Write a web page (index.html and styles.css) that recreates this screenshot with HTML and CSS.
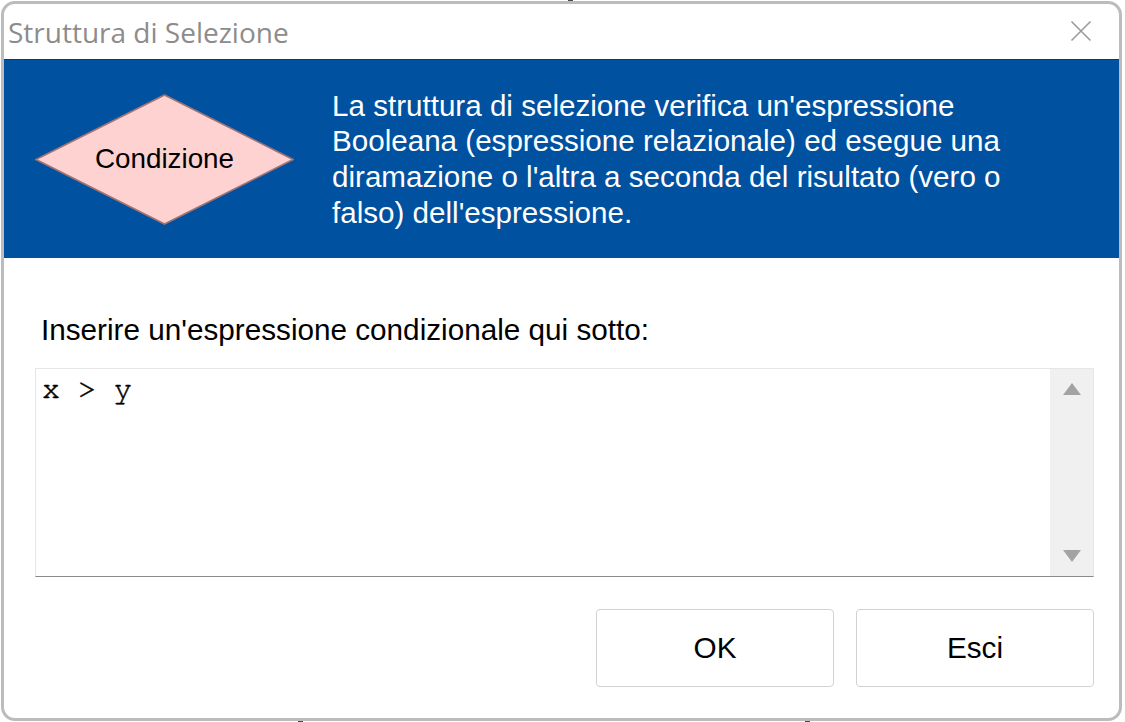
FILE: index.html
```html
<!DOCTYPE html>
<html lang="it">
<head>
<meta charset="utf-8">
<title>Struttura di Selezione</title>
<link rel="stylesheet" href="styles.css">
</head>
<body>
<span class="mark mark-top"></span>
<span class="mark mark-bl"></span>
<span class="mark mark-br"></span>
<div class="window">
  <div class="titlebar">
    <span class="title">Struttura di Selezione</span>
    <span class="close" aria-label="Chiudi">
      <svg width="22" height="22" viewBox="0 0 22 22"><path d="M1.5 1.5 L20.5 20.5 M20.5 1.5 L1.5 20.5" stroke="#9a9a9a" stroke-width="1.6" fill="none"/></svg>
    </span>
  </div>
  <div class="banner">
    <div class="diamond">
      <svg width="259" height="131" viewBox="0 0 259 131"><polygon points="1,65.5 129.5,1 258,65.5 129.5,130" fill="#ffd2d2" stroke="#a07474" stroke-width="1.6"/></svg>
      <span class="diamond-label">Condizione</span>
    </div>
    <p class="desc">La struttura di selezione verifica un'espressione<br>Booleana (espressione relazionale) ed esegue una<br>diramazione o l'altra a seconda del risultato (vero o<br>falso) dell'espressione.</p>
  </div>
  <div class="body">
    <label class="prompt">Inserire un'espressione condizionale qui sotto:</label>
    <div class="editor">
      <div class="editor-text">x &gt; y</div>
      <div class="scrollbar">
        <span class="arrow arrow-up"></span>
        <span class="arrow arrow-down"></span>
      </div>
    </div>
    <div class="buttons">
      <button class="btn">OK</button>
      <button class="btn">Esci</button>
    </div>
  </div>
</div>
</body>
</html>
```

FILE: styles.css
```css
html, body {
  margin: 0;
  padding: 0;
  background: #ffffff;
  width: 1125px;
  height: 722px;
  overflow: hidden;
}
body {
  position: relative;
  font-family: "Liberation Sans", Arial, sans-serif;
}
.mark {
  position: absolute;
  background: #4a4a4a;
  width: 5px;
  height: 3px;
}
.mark-top { left: 568px; top: 0; }
.mark-bl { left: 298px; top: 719px; }
.mark-br { left: 805px; top: 719px; }

.window {
  position: relative;
  margin: 1px 0 0 1px;
  width: 1121px;
  height: 720px;
  box-sizing: border-box;
  border: 3px solid #bcbcbc;
  border-radius: 14px;
  background: #fff;
  overflow: hidden;
  display: flex;
  flex-direction: column;
}
.titlebar {
  height: 55px;
  display: flex;
  align-items: center;
  justify-content: space-between;
  padding: 0 27px 0 4px;
  flex: none;
}
.title {
  font-family: "Open Sans", "Noto Sans", sans-serif;
  font-size: 28px;
  line-height: 34px;
  color: #8c8c8c;
  margin-top: 1px;
}
.close {
  display: flex;
  width: 22px;
  height: 22px;
  margin-top: -2px;
}
.banner {
  height: 199px;
  box-sizing: border-box;
  border-top: 1px solid #003b7c;
  background: #00519f;
  display: flex;
  align-items: center;
  flex: none;
}
.diamond {
  position: relative;
  margin-left: 31px;
  width: 259px;
  height: 131px;
  flex: none;
}
.diamond svg { display: block; }
.diamond-label {
  position: absolute;
  inset: 0;
  display: flex;
  align-items: center;
  justify-content: center;
  font-size: 27.8px;
  color: #000;
}
.desc {
  margin: 0 0 0 38px;
  color: #ffffff;
  font-size: 29.6px;
  line-height: 35.7px;
  white-space: nowrap;
}
.body {
  flex: 1;
  display: flex;
  flex-direction: column;
  padding: 58px 25px 0 31px;
}
.prompt {
  font-size: 29.7px;
  line-height: 28px;
  color: #000;
  margin-left: 6px;
  white-space: nowrap;
}
.editor {
  margin-top: 24px;
  height: 209px;
  box-sizing: border-box;
  border: 1px solid #e6e6e6;
  border-bottom: 1px solid #8a8a8a;
  display: flex;
}
.editor-text {
  flex: 1;
  font-family: "Nimbus Mono PS", "Nimbus Mono L", "FreeMono", "Courier New", "Liberation Mono", monospace;
  font-size: 30px;
  line-height: 36px;
  padding: 2px 0 0 6px;
  color: #000;
  -webkit-text-stroke: 0.5px #000;
}
.scrollbar {
  width: 43px;
  background: #f0f0f0;
  display: flex;
  flex-direction: column;
  justify-content: space-between;
  align-items: center;
  padding: 14px 0 14px;
}
.arrow {
  width: 0;
  height: 0;
  border-left: 9px solid transparent;
  border-right: 9px solid transparent;
}
.arrow-up { border-bottom: 12px solid #a3a3a3; }
.arrow-down { border-top: 12px solid #a3a3a3; }

.buttons {
  margin-top: 32px;
  display: flex;
  justify-content: flex-end;
  gap: 22px;
}
.btn {
  width: 238px;
  height: 78px;
  background: #fff;
  border: 1px solid #d2d2d2;
  border-radius: 4px;
  font-family: "Liberation Sans", Arial, sans-serif;
  font-size: 29.7px;
  color: #000;
  padding: 0;
}
```
